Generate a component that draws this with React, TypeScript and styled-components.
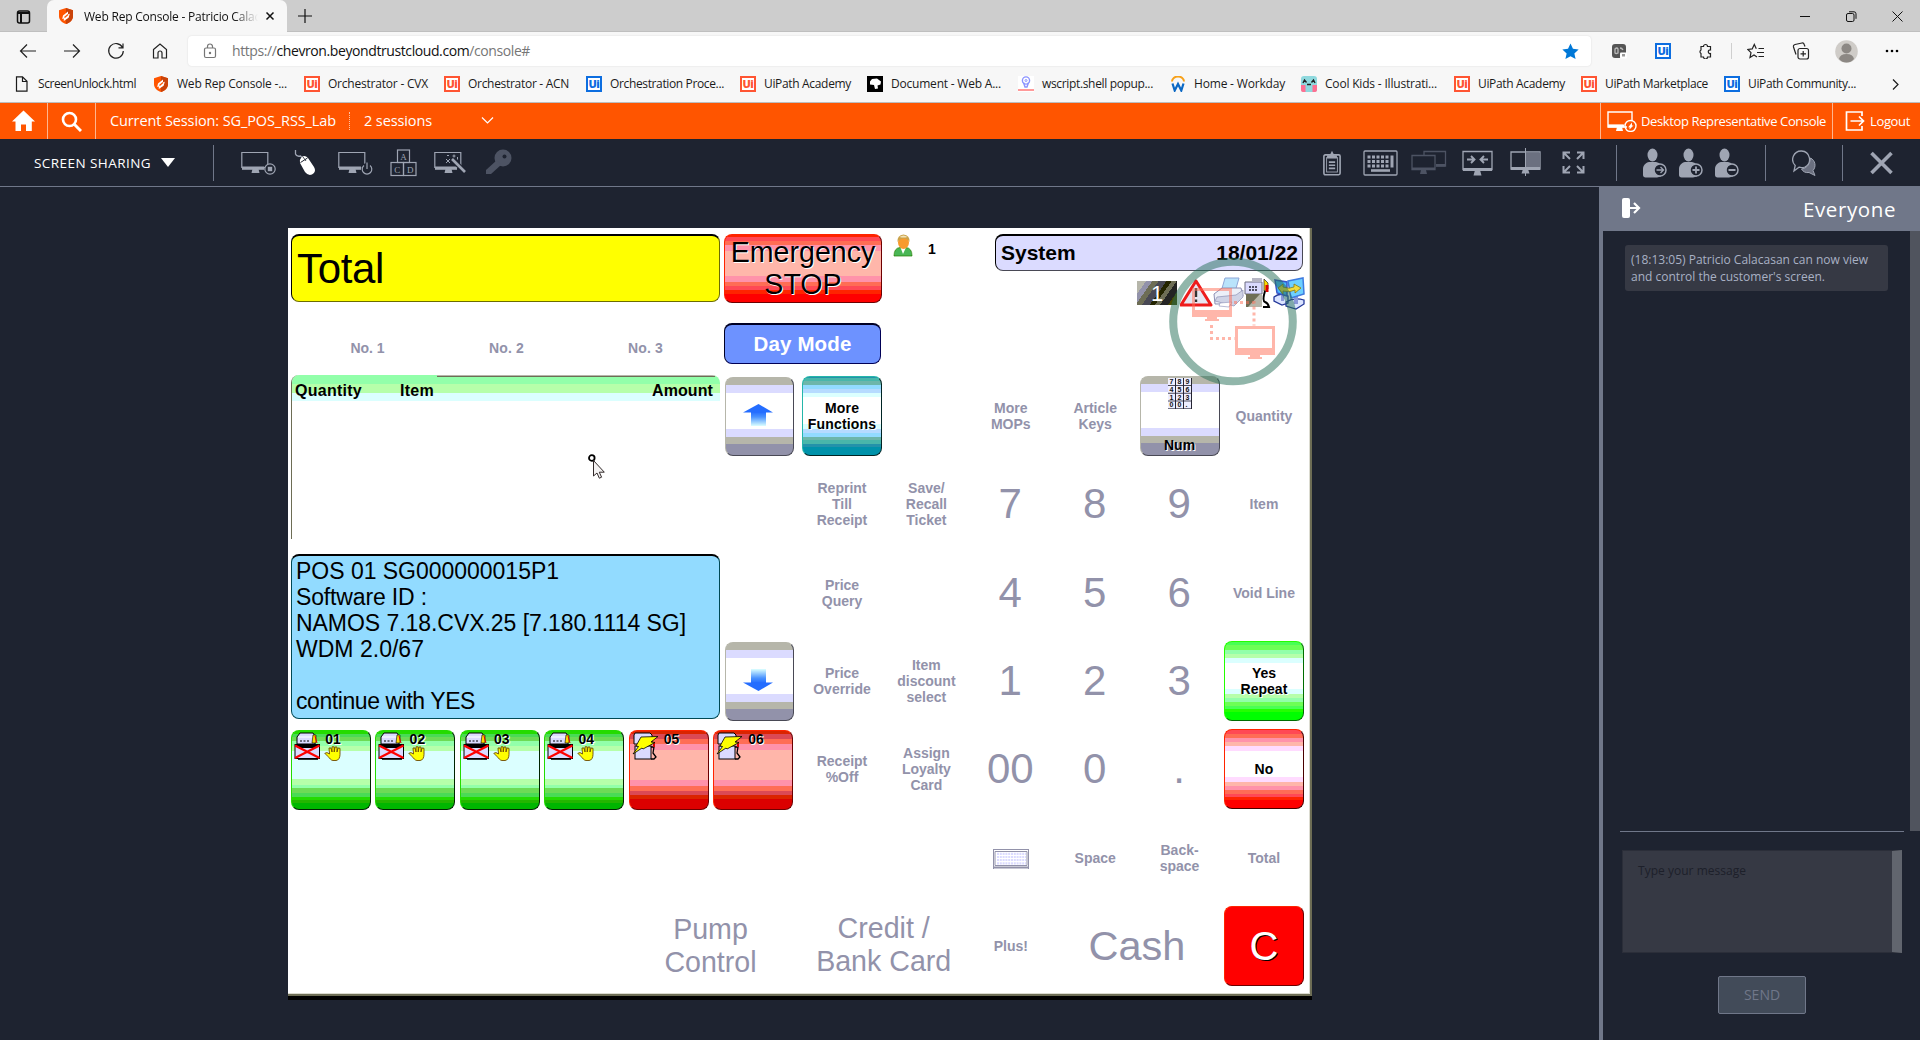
import React, { useLayoutEffect, useRef } from "react";
import styled, { createGlobalStyle, css } from "styled-components";

const UI = `"Open Sans", "Noto Sans", sans-serif`;
const ARIAL = `"Liberation Sans", Arial, sans-serif`;
const NAVY = "#1e2330";
const SLATE = "#707789";
const MUTE = "#9292aa";

const Global = createGlobalStyle`
  *, *::before, *::after { box-sizing: border-box; }
  body { margin: 0; background: ${NAVY}; overflow: hidden; font-family: ${UI}; }
  svg { display: block; flex: none; }
`;

/* ---------- text that is tracked to a given width ---------- */

const FitSpan = styled.span`
  display: inline-block;
  white-space: pre;
  flex: none;
`;

function Fit({ w, children }: { w: number; children: React.ReactNode }) {
  const ref = useRef<HTMLSpanElement>(null);
  useLayoutEffect(() => {
    const el = ref.current;
    if (!el) return;
    el.style.letterSpacing = "0px";
    const n = (el.textContent || "").length || 1;
    el.style.letterSpacing = `${(w - el.getBoundingClientRect().width) / n}px`;
  }, [w]);
  return <FitSpan ref={ref}>{children}</FitSpan>;
}

/* ---------- shell ---------- */

const Page = styled.div`
  width: 1920px;
  height: 1040px;
  display: flex;
  flex-direction: column;
  overflow: hidden;
`;

const TabStrip = styled.div`
  height: 32px;
  flex: none;
  display: flex;
  background: #cdcdcd;
  box-shadow: inset 0 -1px 0 #bfbfbf;
  color: #111;
`;

const TabActions = styled.div`
  width: 47px;
  display: flex;
  align-items: center;
  padding-left: 16px;
`;

const Tab = styled.div`
  width: 240px;
  padding: 0 12px;
  display: flex;
  align-items: center;
  background: #f7f7f7;
  border-radius: 7px 7px 0 0;
  font-size: 12px;
`;

const TabTitle = styled.div`
  width: 174px;
  margin-left: 11px;
  overflow: hidden;
  white-space: nowrap;
  mask-image: linear-gradient(90deg, #000 150px, transparent 174px);
`;

const TabClose = styled.div`
  margin-left: 7px;
`;

const NewTab = styled.div`
  display: flex;
  align-items: center;
  padding-left: 11px;
`;

const WindowButtons = styled.div`
  margin-left: auto;
  display: flex;
  align-items: center;
`;

const WinButton = styled.div`
  width: 46px;
  display: flex;
  justify-content: center;
`;

const NavBar = styled.div`
  height: 38px;
  flex: none;
  display: flex;
  align-items: center;
  background: #f7f7f7;
  color: #222;
`;

const NavIcons = styled.div`
  width: 188px;
  display: flex;
  padding-left: 18px;
  gap: 24px;
`;

const Address = styled.div`
  width: 1403px;
  height: 30px;
  display: flex;
  align-items: center;
  padding: 0 12px 0 14px;
  background: #fff;
  border-radius: 4px;
  box-shadow: 0 0 2px rgba(0, 0, 0, 0.12);
  font-size: 14px;
  color: #767676;
`;

const AddressText = styled.div`
  margin-left: 14px;
  flex: 1;
  line-height: 20px;
  b {
    font-weight: 400;
    color: #111;
  }
`;

const Extensions = styled.div`
  flex: 1;
  display: flex;
  align-items: center;
`;

const ExtSlot = styled.div<{ $w: number }>`
  width: ${(p) => p.$w}px;
  flex: none;
  display: flex;
  justify-content: center;
`;

const ExtRule = styled.div`
  width: 1px;
  height: 16px;
  background: #cfcfcf;
`;

const Bookmarks = styled.div`
  height: 33px;
  flex: none;
  display: flex;
  align-items: center;
  padding: 0 20px 4px 14px;
  background: #f7f7f7;
  border-bottom: 1px solid #bdbdbd;
  font-size: 12px;
  color: #1b1b1b;
`;

const Bookmark = styled.div<{ $w: number }>`
  width: ${(p) => p.$w}px;
  flex: none;
  display: flex;
  align-items: center;
  gap: 8px;
  line-height: 16px;
`;

const BookmarkMore = styled.div`
  margin-left: auto;
`;

const UiBadge = styled.span<{ $c: string }>`
  width: 16px;
  height: 16px;
  flex: none;
  border: 2px solid ${(p) => p.$c};
  color: ${(p) => p.$c};
  background: #fff;
  font: 800 11px/12px ${UI};
  letter-spacing: -0.5px;
  text-align: center;
`;

/* ---------- session bar ---------- */

const SessionBar = styled.div`
  height: 36px;
  flex: none;
  display: flex;
  background: #ff5500;
  color: #fff;
  font-size: 14.5px;
`;

const BarIcon = styled.div<{ $w: number }>`
  width: ${(p) => p.$w}px;
  display: flex;
  align-items: center;
  justify-content: center;
  border-right: 1px solid #ffb58e;
`;

const SessionName = styled.div`
  display: flex;
  align-items: center;
  width: 253px;
  padding: 0 0 2px 14px;
`;

const Dots = styled.div`
  height: 18px;
  margin: 9px 14px 0 0;
  border-left: 1px dotted #ffc4a6;
`;

const SessionCount = styled.div`
  display: flex;
  align-items: center;
  gap: 49px;
  padding-bottom: 2px;
`;

const BarRight = styled.div`
  margin-left: auto;
  display: flex;
  font-size: 13px;
`;

const BarLink = styled.div<{ $w: number; $gap: number; $pad: number }>`
  width: ${(p) => p.$w}px;
  display: flex;
  align-items: center;
  gap: ${(p) => p.$gap}px;
  padding-left: ${(p) => p.$pad}px;
  border-left: 1px solid #ffb58e;
`;

/* ---------- toolbar ---------- */

const Toolbar = styled.div`
  height: 48px;
  flex: none;
  display: flex;
  align-items: center;
  background: ${NAVY};
  border-bottom: 1px solid ${SLATE};
  color: #fff;
`;

const ModeMenu = styled.div`
  width: 213px;
  flex: none;
  padding-left: 34px;
  display: flex;
  align-items: center;
  gap: 10px;
  font-size: 13.5px;
`;

const Triangle = styled.i`
  border: 7.5px solid transparent;
  border-top: 9px solid #fff;
  border-bottom: 0;
`;

const Rule = styled.div<{ $ml?: number }>`
  width: 1px;
  height: 36px;
  flex: none;
  margin-left: ${(p) => p.$ml || 0}px;
  background: ${SLATE};
`;

const Tool = styled.div<{ $w: number }>`
  width: ${(p) => p.$w}px;
  flex: none;
  display: flex;
  justify-content: center;
  color: #9fa5b3;
`;

const ToolGroup = styled.div<{ $ml: number }>`
  display: flex;
  flex: none;
  align-items: center;
  margin-left: ${(p) => p.$ml}px;
`;

/* ---------- workspace ---------- */

const Workspace = styled.div`
  flex: 1;
  display: flex;
  min-height: 0;
`;

const Stage = styled.div`
  width: 1599px;
  padding: 41px 0 0 288px;
`;

const Remote = styled.div`
  position: relative;
  width: 1024px;
  height: 772px;
  background: #000;
`;

const Pos = styled.div`
  height: 768px;
  padding: 6px 7px 0 3px;
  display: flex;
  flex-direction: column;
  background: #fff;
  border-right: 2px solid #6d6d55;
  border-bottom: 2px solid #6d6d55;
  box-shadow: inset -1px -1px 0 #dbdbd0;
  font-family: ${ARIAL};
  color: #000;
`;

const PosHead = styled.div`
  height: 142px;
  display: flex;
`;

const HeadLeft = styled.div`
  width: 429px;
  margin-right: 4px;
`;

const panel = css`
  border: 1px solid;
  border-radius: 8px;
`;

const TotalBox = styled.div`
  ${panel}
  height: 68px;
  padding-left: 5px;
  background: #ffff00;
  border-color: #000 #6d6d00 #6d6d00 #000;
  border-top-width: 2px;
  font-size: 42px;
  line-height: 65px;
`;

const Counters = styled.div`
  display: flex;
  height: 90px;
  padding: 37px 0 0 7px;
`;

const Counter = styled.div`
  width: 139px;
  text-align: center;
  font-weight: 700;
  font-size: 14px;
  line-height: 18px;
  color: ${MUTE};
`;

const HeadMode = styled.div`
  width: 158px;
`;

const stripes = (rows: [string, number][]) => {
  let last = 0;
  const parts = rows.map(([c, end]) => {
    const s = `${c} ${last}px ${end}px`;
    last = end;
    return s;
  });
  return `linear-gradient(${parts.join(",")})`;
};

const skins = {
  emergency: {
    bg: stripes([["#ff2400", 3], ["#ff4955", 7], ["#ff6d55", 11], ["#ff92aa", 17], ["#ffb6aa", 42], ["#ff92aa", 48], ["#ff6d55", 52], ["#ff4955", 56], ["#ff2400", 60], ["#ff0000", 69]]),
    lit: "#ff2400", dark: "#6d0000",
  },
  green: {
    bg: stripes([["#24db00", 4], ["#49db55", 7], ["#6ddb55", 11], ["#92ffaa", 16], ["#b6ffaa", 21], ["#dbffff", 49], ["#b6ffaa", 55], ["#92ffaa", 58], ["#6ddb55", 63], ["#49db55", 67], ["#24db00", 70], ["#24b600", 73], ["#00b600", 80]]),
    lit: "#24db00", dark: "#002400",
  },
  red: {
    bg: stripes([["#db2400", 4], ["#db4955", 9], ["#ff6d55", 14], ["#ff92aa", 20], ["#ffb6aa", 50], ["#ff92aa", 56], ["#ff6d55", 61], ["#db4955", 65], ["#db2400", 69], ["#db0000", 80]]),
    lit: "#ff2400", dark: "#6d0000",
  },
  grey: {
    bg: stripes([["#b6b6aa", 8], ["#dbdbff", 16], ["#ffffff", 52], ["#dbdbff", 60], ["#b6b6aa", 67], ["#9292aa", 80]]),
    lit: "#b6b6aa", dark: "#494955",
  },
  teal: {
    bg: stripes([["#2492aa", 2], ["#49b6aa", 5], ["#6db6aa", 9], ["#92dbff", 13], ["#b6dbff", 17], ["#dbffff", 21], ["#ffffff", 48], ["#dbffff", 53], ["#b6dbff", 57], ["#92dbff", 61], ["#6db6aa", 64], ["#49b6aa", 68], ["#2492aa", 71], ["#0092aa", 80]]),
    lit: "#24b6aa", dark: "#002424",
  },
  yes: {
    bg: stripes([["#24ff00", 1], ["#49ff55", 4], ["#6dff55", 9], ["#92ffaa", 13], ["#b6ffaa", 17], ["#dbffff", 22], ["#ffffff", 48], ["#dbffff", 53], ["#b6ffaa", 57], ["#92ffaa", 61], ["#6dff55", 65], ["#49ff55", 68], ["#24ff00", 71], ["#00ff00", 80]]),
    lit: "#24ff00", dark: "#006d00",
  },
  no: {
    bg: stripes([["#ff2400", 1], ["#ff4955", 5], ["#ff6d55", 9], ["#ff92aa", 13], ["#ffb6aa", 17], ["#ffdbff", 22], ["#ffffff", 48], ["#ffdbff", 53], ["#ffb6aa", 57], ["#ff92aa", 61], ["#ff6d55", 65], ["#ff4955", 68], ["#ff2400", 71], ["#ff0000", 80]]),
    lit: "#ff2400", dark: "#490000",
  },
  clear: { bg: "#ff0000", lit: "#ff2400", dark: "#6d0000" },
};
type Skin = keyof typeof skins;

const PosButton = styled.div<{ $skin: Skin; $w?: number; $h?: number }>`
  width: ${(p) => p.$w || 80}px;
  height: ${(p) => p.$h || 80}px;
  flex: none;
  display: flex;
  align-items: center;
  justify-content: center;
  border: 1px solid;
  border-color: ${(p) => `${skins[p.$skin].lit} ${skins[p.$skin].dark} ${skins[p.$skin].dark} ${skins[p.$skin].lit}`};
  border-radius: 8px;
  background: ${(p) => skins[p.$skin].bg} border-box;
  text-align: center;
  text-shadow: 1px 1px 0 #fff;
  font-weight: 700;
  font-size: 14px;
  line-height: 16px;
`;

const EmergencyText = styled.div`
  font-weight: 400;
  font-size: 28.6px;
  line-height: 32.5px;
  padding-bottom: 1px;
`;

const DayMode = styled.div`
  ${panel}
  width: 157px;
  height: 41px;
  margin-top: 20px;
  background: #6d92ff;
  border-color: #000024 #000055 #000055 #000024;
  border-top-width: 2px;
  color: #fff;
  font-weight: 700;
  font-size: 20.5px;
  line-height: 37px;
  text-align: center;
`;

const Operator = styled.div`
  margin-left: 11px;
  display: flex;
  gap: 15px;
  font-weight: 700;
  font-size: 14px;
  line-height: 31px;
`;

const HeadStatus = styled.div`
  width: 308px;
  margin-left: auto;
`;

const SystemBox = styled.div`
  ${panel}
  height: 37px;
  padding: 0 4px 0 5px;
  display: flex;
  justify-content: space-between;
  background: #dbdbff;
  border-color: #000 #494955 #494955 #000;
  border-top-width: 2px;
  font-weight: 700;
  font-size: 21px;
  line-height: 33px;
`;

const StatusIcons = styled.div`
  display: flex;
  justify-content: flex-end;
  align-items: center;
  height: 34px;
  margin: 5px -3px 0 0;
`;

const ShiftBadge = styled.div`
  width: 40px;
  height: 24px;
  margin: -1px 3px 0 0;
  color: #fff;
  font-size: 22px;
  line-height: 25px;
  text-align: center;
  background: linear-gradient(125deg, #b6b6aa 0 16%, #9292aa 16% 27%, #6d6d55 27% 38%, #494955 38% 52%, #242400 52% 61%, #6d6d55 61% 70%, #242424 70% 84%, #494900 84%);
`;

const PosMain = styled.div`
  height: 612px;
  display: flex;
`;

const LeftPane = styled.div`
  width: 507px;
  flex: none;
  margin-right: 4px;
`;

const LeftTop = styled.div`
  height: 354px;
  display: flex;
`;

const ListColumn = styled.div`
  width: 429px;
  margin: -1px 5px 0 0;
`;

const ListBox = styled.div`
  height: 164px;
  border-left: 1px solid #6d6d55;
  border-radius: 8px 8px 0 0;
`;

const ListHead = styled.div`
  height: 26px;
  display: grid;
  grid-template-columns: 105px 1fr auto;
  padding: 0 7px 0 3px;
  border-radius: 7px 8px 0 0;
  background:
    linear-gradient(#b6b6aa 1px, #6d6d55 1px) 145px 0 / 278px 2px no-repeat,
    linear-gradient(#92ffaa 9px, #b6ffaa 9px 18px, #dbffff 18px);
  font-weight: 700;
  font-size: 16px;
  line-height: 31px;
`;

const InfoBox = styled.div`
  ${panel}
  height: 165px;
  margin-top: 15px;
  padding: 2px 4px;
  background: #92dbff;
  border-color: #000 #004955 #004955 #004955;
  border-top-width: 2px;
  font-size: 23px;
  line-height: 26px;
  white-space: pre;
`;

const ArrowColumn = styled.div`
  width: 69px;
  height: 345px;
  padding-top: 1px;
  display: flex;
  flex-direction: column;
  justify-content: space-between;
  svg {
    margin: 0 3px 3px 0;
  }
`;

const PumpRow = styled.div`
  display: flex;
  gap: 4.4px;
`;

const PumpFace = styled.div`
  align-self: flex-start;
  width: 76px;
  display: flex;
  font-size: 14px;
  padding: 1px 0 0 1px;
`;

const PumpTag = styled.div<{ $hand: boolean }>`
  width: 18px;
  margin-left: ${(p) => (p.$hand ? 3 : 5)}px;
  line-height: 15px;
  text-align: center;
  svg {
    margin-top: -1px;
  }
`;

const PumpControl = styled.div`
  margin: 96px 0 0 337px;
  width: 165px;
  height: 80px;
  display: flex;
  align-items: center;
  justify-content: center;
  text-align: center;
  font-size: 28.6px;
  line-height: 33px;
  color: ${MUTE};
`;

const KeyGrid = styled.div`
  width: 502px;
  flex: none;
  display: grid;
  grid-template-columns: repeat(6, 80px);
  grid-template-rows: repeat(7, 80px);
  column-gap: 4.4px;
  row-gap: 8.33px;
`;

const Key = styled.div<{ $big?: number; $span?: number }>`
  grid-column: span ${(p) => p.$span || 1};
  display: flex;
  align-items: center;
  justify-content: center;
  text-align: center;
  white-space: pre;
  color: ${MUTE};
  font-weight: ${(p) => (p.$big ? 400 : 700)};
  font-size: ${(p) => p.$big || 14}px;
  line-height: ${(p) => (p.$big ? "33px" : "16px")};
  padding: 0 ${(p) => (p.$big ? 1 : 0)}px ${(p) => (p.$big ? 1 : 0)}px 0;
`;

const Black = styled.span<{ $ls?: number }>`
  white-space: pre;
  letter-spacing: ${(p) => p.$ls ?? 0}px;
`;

const NumFace = styled.div`
  height: 76px;
  display: flex;
  flex-direction: column;
  align-items: center;
  justify-content: space-between;
  padding-bottom: 1px;
`;

const ClearLetter = styled.div`
  color: #fff;
  font-weight: 400;
  font-size: 40px;
  line-height: 80px;
  text-shadow: 1px 1px 0 #000;
`;

const Overlay = styled.svg`
  position: absolute;
  left: 880px;
  top: 28px;
`;

const Pointer = styled.svg`
  position: absolute;
  left: 299px;
  top: 225px;
`;

/* ---------- chat ---------- */

const Chat = styled.div`
  width: 321px;
  display: flex;
  flex-direction: column;
  background: ${NAVY};
  border-left: 4px solid ${SLATE};
`;

const ChatHead = styled.div`
  height: 44px;
  flex: none;
  display: flex;
  align-items: center;
  justify-content: space-between;
  padding: 0 24px 1px 18px;
  background: ${SLATE};
  color: #fff;
  font-size: 20.5px;
`;

const ChatLog = styled.div`
  height: 600px;
  padding: 14px 22px;
  border-right: 10px solid #50545e;
`;

const Bubble = styled.div`
  width: 263px;
  height: 46px;
  padding: 6px;
  border-radius: 3px;
  background: #363944;
  color: #a9b1c4;
  font-size: 12px;
  line-height: 17px;
`;

const ChatRule = styled.div`
  height: 1px;
  margin: 0 16px 0 17px;
  background: ${SLATE};
`;

const Message = styled.div`
  width: 280px;
  height: 103px;
  margin: 18px 0 0 19px;
  padding: 11px 15px;
  background: #363944;
  border: 1px solid #2b2e39;
  border-right: 10px solid #61656e;
  color: #1d202a;
  font-size: 12px;
  line-height: 18px;
`;

const Send = styled.div`
  width: 88px;
  height: 38px;
  margin: 23px 0 0 115px;
  border: 1px solid ${SLATE};
  border-radius: 2px;
  background: #424b59;
  color: ${SLATE};
  font-size: 14px;
  line-height: 36px;
  text-align: center;
`;

/* ---------- icons ---------- */

const S = (p: { w: number; h: number; vb?: string; sw?: number; children: React.ReactNode }) => (
  <svg width={p.w} height={p.h} viewBox={p.vb || `0 0 ${p.w} ${p.h}`} fill="none" stroke="currentColor" strokeWidth={p.sw || 1.2}>
    {p.children}
  </svg>
);

const Shield = ({ w = 14 }: { w?: number }) => (
  <svg width={w} height={16} viewBox="0 0 14 16">
    <path d="M7 0 14 2.2V8c0 4-3 6.600-7 8-4-1.400-7-4-7-8V2.200Z" fill="#ff5500" />
    <path d="M7 0 14 2.200V8c0 4-3 6.600-7 8Z" fill="#c9430a" />
    <path d="M4 7.500 9 3.600v2.600l1.800-.4-1.200 4L4.800 13v-2.600l-1.600.6Z" fill="#fff" />
    <path d="M5.500 9.500 9 6.500" stroke="#ff5500" strokeWidth="1.300" />
  </svg>
);

const UserGlyph = ({ kind }: { kind: "go" | "plus" | "minus" }) => (
  <S w={24} h={30} sw={1.3}>
    <ellipse cx="9.500" cy="7" rx="5" ry="6.500" fill="#9fa5b3" stroke="none" />
    <path d="M0 27V21c0-4 3-6.500 6-7h7c2 .3 4 1.500 5 3.500v11L14 29.500H2.500C1 29.500 0 28.500 0 27Z" fill="#9fa5b3" stroke="none" />
    <circle cx="17" cy="22" r="6" fill={NAVY} stroke="#9fa5b3" strokeWidth="1.500" />
    {kind === "go" && <path d="M13.500 22h6.500M17.500 19l3 3-3 3" />}
    {kind === "plus" && <path d="M13.500 22h7M17 18.500v7" strokeWidth="1.800" />}
    {kind === "minus" && <path d="M13.500 22h7" strokeWidth="2" />}
  </S>
);

const PrinterX = () => (
  <svg width={27} height={28} viewBox="0 0 27 28">
    <path d="M6 1h13l2 3v8H3V5Z" fill="#dbdbff" stroke="#000" />
    <path d="M4 5h14" stroke="#fff" />
    <path d="M19 3h3v8h-4Z" fill="#ffdb00" stroke="#000" strokeWidth=".6" />
    <path d="M21 4l2 7" stroke="#db0000" />
    <path d="M6 9h2M9.500 9h2M13 9h2" stroke="#000" strokeWidth="1" />
    <rect x="1" y="12.500" width="24.500" height="14" fill="#dbdbff" stroke="#000" />
    <path d="M1 13h24l-3 3H4Z" fill="#000" />
    <path d="M4 27h20" stroke="#000" strokeWidth="1.600" />
    <path d="M1 13.500 25.500 26M25.500 13.500 1 26" stroke="#ff0000" strokeWidth="2.200" />
  </svg>
);

const Hand = () => (
  <svg width={18} height={15} viewBox="0 0 18 15">
    <path d="M5.500 8 5 2h2l1 4V.8h2.200V6L11 1h2v5l1-4 2 .3V8.500c0 3-1.500 6-4 6H9C7 14.500 5.500 12 4 10.500L.8 7.300 3 6.600Z" fill="#ffff00" stroke="#6d4900" strokeWidth=".9" />
  </svg>
);

const PumpBolt = () => (
  <svg width={26} height={28} viewBox="0 0 26 28">
    <path d="M3 1h15l2 2v9H2V3Z" fill="#dbdbff" stroke="#000" />
    <rect x="3" y="14" width="16" height="13" fill="#dbdbff" stroke="#000" />
    <path d="M19 15h3l-1 6 3 4-2 2h-3" fill="none" stroke="#000" strokeWidth="1.300" />
    <path d="M22 10v5" stroke="#db0000" strokeWidth="2" />
    <path d="M9 5 26 4.500 19 10l4 .5L11 17l-1-1-9 6 5.500-7.500L4 14Z" fill="#ffff00" stroke="#000" strokeWidth=".8" />
  </svg>
);

const Arrow = ({ down }: { down?: boolean }) => (
  <svg width={30} height={24} viewBox="0 0 30 24">
    <defs>
      <linearGradient id={down ? "ad" : "au"} x1="0" x2="0" y1={down ? "1" : "0"} y2={down ? "0" : "1"}>
        <stop offset="0" stopColor="#246dff" />
        <stop offset=".35" stopColor="#4992ff" />
        <stop offset="1" stopColor="#dbffff" />
      </linearGradient>
    </defs>
    <path d={down ? "M8 1h15v14H8Z" : "M8 9h15v14H8Z"} fill={`url(#${down ? "ad" : "au"})`} />
    <path d={down ? "M0 14.500h30L15.500 23Z" : "M0 9.500h30L15.500 1Z"} fill="#246dff" />
  </svg>
);

const Monitor = ({ children, w = 34 }: { children?: React.ReactNode; w?: number }) => (
  <S w={w} h={26} sw={1.2}>
    <path d="M.8 2.500h26v15H.8Z" />
    <path d="M1 16.500h22v3.300H1Z" fill="currentColor" stroke="none" />
    <path d="M11.500 19h6l1 4h-8Z" fill="currentColor" stroke="none" />
    {children}
  </S>
);

const fills = ["#ff5533", "#0d6ee0"];

const bookmarks: { t: string; slot: number; w: number; icon: React.ReactNode }[] = [
  { t: "ScreenUnlock.html", slot: 139, w: 98, icon: <S w={16} h={16}><path d="M2.500.8h6l4.500 4.500V15.200H2.500ZM8.500.8v4.700H13" /></S> },
  { t: "Web Rep Console -...", slot: 151, w: 110, icon: <Shield w={16} /> },
  { t: "Orchestrator - CVX", slot: 140, w: 100, icon: <UiBadge $c={fills[0]}>Ui</UiBadge> },
  { t: "Orchestrator - ACN", slot: 142, w: 101, icon: <UiBadge $c={fills[0]}>Ui</UiBadge> },
  { t: "Orchestration Proce...", slot: 154, w: 114, icon: <UiBadge $c={fills[1]}>Ui</UiBadge> },
  { t: "UiPath Academy", slot: 127, w: 87, icon: <UiBadge $c={fills[0]}>Ui</UiBadge> },
  { t: "Document - Web A...", slot: 151, w: 110, icon: <svg width={16} height={16}><path d="M0 0h16v16H0Z" /><path d="M3 5.500 5 3l5-.5 4 3-.500 3-3 1 .5 3-3 .5-1-4L3 8.500Z" fill="#fff" /></svg> },
  { t: "wscript.shell popup...", slot: 152, w: 111, icon: <svg width={16} height={16} fill="none" stroke="#8b93ff"><path d="M0 0h16v16H0Z" fill="#fff" stroke="none" /><circle cx="8" cy="4.500" r="3.600" strokeWidth="1.400" /><path d="M5.500 6.500 7 11h2l1.500-4.500" strokeWidth="1.400" /><circle cx="8" cy="4.500" r="1" /><path d="M0 14h16" stroke="#ff9a9a" strokeWidth="2" /></svg> },
  { t: "Home - Workday", slot: 131, w: 91, icon: <svg width={16} height={16} fill="none"><path d="M2 5.500a6 5 0 0 1 12 0" stroke="#f7a11a" strokeWidth="2" /><path d="m2.500 7.500 2.200 7L8 8l3.300 6.500 2.200-7" stroke="#0b68c4" strokeWidth="2.200" /></svg> },
  { t: "Cool Kids - Illustrati...", slot: 153, w: 112, icon: <svg width={16} height={16}><rect width="16" height="16" rx="3" fill="#8fd9de" /><path d="M0 9h4.500v7H2a2 2 0 0 1-2-2ZM11.500 9H16v5a2 2 0 0 1-2 2h-2.500Z" fill="#ff6f91" /><path d="M2 7 3.500 4l2 2.500M10.500 6.500l2-2.500L14 7M6 8.500h4" fill="none" stroke="#222" strokeWidth="1.400" /></svg> },
  { t: "UiPath Academy", slot: 127, w: 87, icon: <UiBadge $c={fills[0]}>Ui</UiBadge> },
  { t: "UiPath Marketplace", slot: 143, w: 103, icon: <UiBadge $c={fills[0]}>Ui</UiBadge> },
  { t: "UiPath Community...", slot: 134, w: 108, icon: <UiBadge $c={fills[1]}>Ui</UiBadge> },
];

function Chrome() {
  return (
    <>
      <TabStrip>
        <TabActions>
          <S w={15} h={15} sw={1.5}><rect x="1.500" y="2" width="12" height="12" rx="2" /><path d="M1.500 4h12M5 5v9" strokeWidth="2" /></S>
        </TabActions>
        <Tab>
          <Shield />
          <TabTitle><Fit w={176}>Web Rep Console - Patricio Calac</Fit></TabTitle>
          <TabClose><S w={10} h={10} sw={1.5}><path d="m1.500 1.500 7 7m0-7-7 7" /></S></TabClose>
        </Tab>
        <NewTab><S w={14} h={14}><path d="M7 0v14M0 7h14" /></S></NewTab>
        <WindowButtons>
          <WinButton><S w={10} h={10} sw={1}><path d="M0 5.500h10" /></S></WinButton>
          <WinButton><S w={11} h={11} sw={1}><rect x=".5" y="2.500" width="7.500" height="8" rx="1.500" /><path d="M3 .8h5a2 2 0 0 1 2 2v5" /></S></WinButton>
          <WinButton><S w={11} h={11} sw={1}><path d="m.5.500 10 10m0-10-10 10" /></S></WinButton>
        </WindowButtons>
      </TabStrip>
      <NavBar>
        <NavIcons>
          <S w={20} h={20}><path d="M18 10H2.500M9 3.500 2.500 10 9 16.500" /></S>
          <S w={20} h={20}><path d="M2 10h15.500M11 3.500l6.500 6.500-6.500 6.500" /></S>
          <S w={20} h={20}><path d="M16.500 6.500A7.300 7.300 0 1 0 17.300 10M17 2.500v4.300h-4.500" /></S>
          <S w={20} h={20}><path d="M3.500 8.500 10 3l6.500 5.500V17h-4.500v-5a2 2 0 0 0-4 0v5H3.500Z" /></S>
        </NavIcons>
        <Address>
          <S w={16} h={18}><rect x="2.500" y="6" width="11" height="9.500" rx="1.500" /><path d="M5.500 6V4.500a2.500 2.500 0 0 1 5 0V6" /><circle cx="8" cy="11" r=".6" /></S>
          <AddressText><Fit w={298}>https://<b>chevron.beyondtrustcloud.com</b>/console#</Fit></AddressText>
          <svg width={17} height={17} viewBox="0 0 18 18"><path d="m9 .5 2.600 5.600 6 .7-4.500 4.200 1.300 6L9 14l-5.400 3 1.300-6L.4 6.800l6-.7Z" fill="#0078d7" /></svg>
        </Address>
        <Extensions>
          <ExtSlot $w={56}><svg width={15} height={15}><rect width="14" height="14" rx="3" fill="#555" /><path d="M3 5q2-2 3 0v4q-2 1-3 0ZM8 4q2 0 3 2" fill="none" stroke="#bbb" strokeWidth="1.300" /><rect x="8" y="8.500" width="7" height="6" rx="1" fill="#fff" /><rect x="10" y="10" width="3" height="2.500" fill="#999" /></svg></ExtSlot>
          <ExtSlot $w={32}><UiBadge $c={fills[1]}>Ui</UiBadge></ExtSlot>
          <ExtSlot $w={52}><S w={16} h={16}><path d="M4 3.500h2.500a2 2 0 0 1 4 0h3V7a1.800 1.800 0 1 0 0 3.500V14h-3a2 2 0 0 1-4 0H4v-3.500A2 2 0 0 1 4 7Z" /></S></ExtSlot>
          <ExtRule />
          <ExtSlot $w={48}><S w={18} h={16}><path d="M10 14 7 12l-4 2.500 1-4.800L.8 6.500l4.400-.6L7.300 1.500l2 4.300M11.500 5.500H17M10 9.500h7M11.500 13.500H17" /></S></ExtSlot>
          <ExtSlot $w={42}><S w={18} h={18}><rect x="6" y="6.500" width="10.500" height="10.500" rx="2" /><path d="M11.200 9v5.500M8.500 11.800H14M4 12.500 1.500 5A2 2 0 0 1 3 2.500L10 1a2 2 0 0 1 2.200 1.500L13 4.500" /></S></ExtSlot>
          <ExtSlot $w={48}><svg width={23} height={23}><circle cx="11.500" cy="11.500" r="11.300" fill="#cfccc8" /><circle cx="11.500" cy="8.500" r="5" fill="#8c8884" /><path d="M4 19q1-5 7.500-5t7.500 5q-3 3.500-7.500 3.500T4 19Z" fill="#8c8884" /></svg></ExtSlot>
          <ExtSlot $w={44}><svg width={14} height={4}><circle cx="2" cy="2" r="1.300" /><circle cx="7" cy="2" r="1.300" /><circle cx="12" cy="2" r="1.300" /></svg></ExtSlot>
        </Extensions>
      </NavBar>
      <Bookmarks>
        {bookmarks.map((b, i) => (
          <Bookmark key={i} $w={b.slot}>{b.icon}<Fit w={b.w}>{b.t}</Fit></Bookmark>
        ))}
        <BookmarkMore><S w={9} h={13}><path d="m2 1.500 5 5-5 5" /></S></BookmarkMore>
      </Bookmarks>
    </>
  );
}

function Session() {
  return (
    <SessionBar>
      <BarIcon $w={48}><svg width={23} height={22}><path d="M11.500.5 23 11.500h-3.200V21H14v-6.500H9V21H3.500v-9.500H0Z" fill="#fff" /></svg></BarIcon>
      <BarIcon $w={48}><S w={21} h={21} sw={2.6}><circle cx="8.500" cy="8.500" r="6.500" /><path d="m13 13 7 7" strokeWidth="3" /></S></BarIcon>
      <SessionName><Fit w={226}>Current Session: SG_POS_RSS_Lab</Fit></SessionName>
      <Dots />
      <SessionCount>
        <Fit w={68}>2 sessions</Fit>
        <S w={13} h={9}><path d="m1 1.500 5.500 5.500L12 1.500" /></S>
      </SessionCount>
      <BarRight>
        <BarLink $w={232} $gap={3} $pad={6}>
          <S w={31} h={22} sw={1.4}><path d="M20 17H1V2h24v9M1 15.500h15" /><path d="M1 14.500h16v3H1Z" fill="#fff" stroke="none" /><path d="M10 17h5l1 4H9Z" fill="#fff" stroke="none" /><circle cx="23.500" cy="16" r="5.500" /><path d="M21 17.500 25 12.500v3l1.500 0-4 4v-2.500Z" fill="#fff" stroke="none" /></S>
          <Fit w={185}>Desktop Representative Console</Fit>
        </BarLink>
        <BarLink $w={88} $gap={5} $pad={12}>
          <S w={20} h={20} sw={1.7}><path d="M17 5V1H1.500v18H17v-4M5.500 10H18M14 5.500l4.500 4.500-4.500 4.500" /></S>
          <Fit w={40}>Logout</Fit>
        </BarLink>
      </BarRight>
    </SessionBar>
  );
}

const BlockLetter = styled.text`
  font: 9px "Liberation Serif", serif;
  fill: #9fa5b3;
  stroke: none;
`;

function Tools() {
  return (
    <Toolbar>
      <ModeMenu><Fit w={117}>SCREEN SHARING</Fit><Triangle /></ModeMenu>
      <Rule />
      <ToolGroup $ml={27}>
        <Tool $w={35}><Monitor w={36}><circle cx="29" cy="19" r="5.200" fill={NAVY} /><rect x="26.800" y="16.800" width="4.400" height="4.400" fill="currentColor" stroke="none" /></Monitor></Tool>
        <Tool $w={60}><svg width={24} height={27}><path d="M1.500 1v4q1 3 5 2l2 2" fill="none" stroke="#9fa5b3" strokeWidth="1.300" /><path d="M7 9q3-4 7 0l6 9q3 5-2 7.500-4 1.500-7-2.500L6 14q-1-3 1-5Z" fill="#fff" /><path d="m6.500 13.500 7-4.500" stroke={NAVY} /><path d="m9 8 3 4" stroke={NAVY} strokeWidth=".8" /></svg></Tool>
        <Tool $w={38}><Monitor w={35}><circle cx="29" cy="19" r="5" fill={NAVY} stroke={NAVY} strokeWidth="2" /><path d="M26 15.500a4.800 4.800 0 1 0 6 0M29 12.500V19" /></Monitor></Tool>
        <Tool $w={58}><S w={27} h={28} sw={1.2}><rect x="7.500" y="1" width="12" height="12.500" /><rect x="1" y="13.500" width="12.500" height="13" /><rect x="13.500" y="13.500" width="12.500" height="13" /><BlockLetter x="10.300" y="10.500">A</BlockLetter><BlockLetter x="4.300" y="23.500">C</BlockLetter><BlockLetter x="17" y="23.500">D</BlockLetter></S></Tool>
        <Tool $w={36}><Monitor w={33}><path d="m17 8 14 14" stroke={NAVY} strokeWidth="5" /><path d="m18 9 13 13" strokeWidth="2.600" /><path d="m12 9 4 4m0-4-4 4M20 4.500v3M18.500 6h3M23.500 7v2.500M13 5.500h2" strokeWidth="1" /></Monitor></Tool>
        <Tool $w={60}><svg width={27} height={27}><circle cx="18" cy="9" r="8.500" fill="#4d5363" /><path d="m12 11 4 5L6 25H1v-4Z" fill="#4d5363" /><circle cx="19.500" cy="7.500" r="2" fill={NAVY} /></svg></Tool>
      </ToolGroup>
      <ToolGroup $ml={780}>
        <Tool $w={48}><S w={18} h={26} vb="0 0 20 28" sw={1.800}><rect x="1" y="5" width="18" height="22" rx="1.500" /><rect x="4" y="8" width="12" height="16" strokeWidth="1" /><path d="M4.500 9V5.500h3L10 .5l2.500 5h3V9Z" fill="currentColor" stroke="none" /><path d="M6.500 13h7M6.500 16.500h7M6.500 20h7" /></S></Tool>
        <Tool $w={49}><S w={35} h={26} vb="0 0 35 26" sw={1.3}><rect x="1" y="1" width="33" height="24" rx="1" /><path d="M4.500 7h22M4.500 11.500h22M4.500 16h22" strokeWidth="3" strokeDasharray="3 1.500" /><path d="M29 5.500v12" strokeWidth="3" /><path d="M8 20.500h19" strokeWidth="2.600" /></S></Tool>
        <Tool $w={48}><svg width={36} height={26} fill="none" stroke="#4d5363" strokeWidth="1.300"><path d="M13 5V1.500h21.500V16H25M1 5.500h23v14H1Z" /><path d="M1 17.500h23v2.500H1ZM10 20h5l1 4H9ZM25 14h9v2.500h-9Z" fill="#4d5363" stroke="none" /></svg></Tool>
        <Tool $w={48}><S w={31} h={26} sw={1.3}><path d="M1 1.500h29v18H1Z" /><path d="M1 18h29v3H1ZM13 20h5l1.500 5.500h-8Z" fill="currentColor" stroke="none" /><path d="M5 9.500h7M9 6l3.500 3.500L9 13M26 9.500h-7M22 6l-3.500 3.500L22 13" strokeWidth="1.900" /></S></Tool>
        <Tool $w={48}><S w={31} h={30} sw={1.3}><path d="M1 4h29v17H1Z" /><path d="M15.500 4.500H30V19H15.500Z" fill="#6b7080" stroke="none" /><path d="M1 19h29v3H1ZM13 21h5l1.500 4.500h-8Z" fill="currentColor" stroke="none" /><path d="M15.500 0v28" strokeWidth="1" /></S></Tool>
        <Tool $w={48}><S w={23} h={23} sw={2}><path d="M1.500 8V1.500H8M15 1.500h6.500V8M21.500 15v6.500H15M8 21.500H1.500V15M2 2l6 6M21 2l-6 6M21 21l-6-6M2 21l6-6" /></S></Tool>
        <Rule $ml={19} />
      </ToolGroup>
      <ToolGroup $ml={26}>
        <Tool $w={24}><UserGlyph kind="go" /></Tool>
        <Tool $w={48}><UserGlyph kind="plus" /></Tool>
        <Tool $w={24}><UserGlyph kind="minus" /></Tool>
        <Rule $ml={26} />
        <Tool $w={76}><S w={24} h={26} sw={1.300}><path d="M9.500 1a8.500 8.500 0 0 1 3.500 16q-3 1-6 .2L2 21l1.200-5.500A8.500 8.500 0 0 1 9.500 1Z" /><path d="M18.500 8a8 8 0 0 1 2.500 12.500l2 5L17 22.500q-5 .8-7.500-3.500 8-1 9-11Z" fill="#6b7080" strokeWidth="1" /></S></Tool>
        <Rule />
        <Tool $w={76}><S w={23} h={24} sw={3.600}><path d="m1.500 2 20 20m0-20-20 20" /></S></Tool>
      </ToolGroup>
    </Toolbar>
  );
}

const KeypadIcon = () => (
  <svg width={24} height={31} viewBox="0 0 24 31">
    <path d="M0 0h24v31H0Z" fill="#242433" />
    {["789", "456", "123", "00."].map((row, r) =>
      row.split("").map((d, c) => (
        <g key={`${r}${c}`}>
          <rect x={c * 8} y={r * 7.800} width="7" height="7" fill="#eeeeff" />
          <text x={c * 8 + 1.500} y={r * 7.800 + 6} fontSize="7" fontWeight="700" fill="#111" fontFamily="Liberation Sans, sans-serif" textShadow="none">{d}</text>
        </g>
      ))
    )}
  </svg>
);

const KeypadWrap = styled.div`
  text-shadow: none;
`;

const KeyboardIcon = () => (
  <svg width={36} height={22} viewBox="0 0 36 22">
    <rect x=".5" y="2.500" width="35" height="20" fill="#fff" stroke="#9292aa" />
    <path d="M2 4.500h32v14H2Z" fill="#fff" stroke="#9292aa" strokeWidth="1" />
    <path d="M4 6.800h29M4 10h29M4 13h29M4 16.300h29" stroke="#dbdbff" strokeWidth="2.200" strokeDasharray="2 .8" />
    <path d="M1 20.500h34" stroke="#9292aa" strokeWidth="2" />
  </svg>
);

function Pump({ n, red }: { n: string; red?: boolean }) {
  return (
    <PosButton $skin={red ? "red" : "green"}>
      <PumpFace>
        {red ? <PumpBolt /> : <PrinterX />}
        <PumpTag $hand={!red}>{n}{!red && <Hand />}</PumpTag>
      </PumpFace>
    </PosButton>
  );
}

function PosScreen() {
  return (
    <Pos>
      <PosHead>
        <HeadLeft>
          <TotalBox><Fit w={87}>Total</Fit></TotalBox>
          <Counters>
            <Counter><Fit w={34}>No. 1</Fit></Counter>
            <Counter><Fit w={35}>No. 2</Fit></Counter>
            <Counter><Fit w={35}>No. 3</Fit></Counter>
          </Counters>
        </HeadLeft>
        <HeadMode>
          <PosButton $skin="emergency" $w={158} $h={69}><EmergencyText>Emergency<br />STOP</EmergencyText></PosButton>
          <DayMode><Fit w={98}>Day Mode</Fit></DayMode>
        </HeadMode>
        <Operator>
          <svg width={20} height={23}><path d="M1 22q0-8 6-8.500h6q6 .5 6 8.500Z" fill="#49b655" stroke="#248000" strokeWidth=".7" /><path d="M7.500 13.500 10 20l3-6.500Z" fill="#fff" /><ellipse cx="10.500" cy="8.500" rx="5.500" ry="6.500" fill="#f79a2e" /><path d="M4.500 8Q4 1 10.500.5 17 1 16.500 8q-2-4-6-3.500-4 0-6 3.500Z" fill="#c9a24a" /><path d="M6.500 3q4-3 8 0-4 1-8 0Z" fill="#f2e3b8" /></svg>
          <span>1</span>
        </Operator>
        <HeadStatus>
          <SystemBox><span>System</span><span>18/01/22</span></SystemBox>
          <StatusIcons>
            <ShiftBadge>1</ShiftBadge>
            <svg width={33} height={28}><path d="M16 2 31 26H1Z" fill="#e6e6f2" stroke="#ee1c1c" strokeWidth="3" strokeLinejoin="round" /><path d="M16 9v9M16 20.500v2.500" stroke="#333" strokeWidth="2.400" /></svg>
            <svg width={31} height={32}><path d="M12 1h14l-4 14H8Z" fill="#b9e3fb" stroke="#8fa6d8" /><path d="M1 17 9 11h19l2 8-10 8H2Z" fill="#eceff8" stroke="#8d90b5" /><path d="m2 24 2-4 19-2 7-5v7l-9 9Z" fill="#cfd3e6" stroke="#8d90b5" strokeWidth=".7" /><path d="m7 26 12-1-3 5-10-1Z" fill="#fff" stroke="#9a9cc0" strokeWidth=".7" /></svg>
            <svg width={29} height={32}><path d="M1 5h17v12H1Z" fill="#dbdbff" stroke="#6d6d80" /><path d="M8 1h10v4H8Z" fill="#b6b6c4" /><path d="M2 17h16v13H2Z" fill="#6d6d55" /><path d="m4 30 12-13h2v13Z" fill="#b6b6aa" /><path d="M5 10h9M5 13h9" stroke="#242433" strokeDasharray="2 1" strokeWidth="1.400" /><path d="m20 2 4 4v6l-4 2Z" fill="#ffdb00" stroke="#222" strokeWidth=".7" /><path d="M23 8v7" stroke="#db0000" strokeWidth="3" /><path d="M21 14q-3 10 0 11t4 5h-6" fill="none" stroke="#000" strokeWidth="2" /></svg>
            <svg width={33} height={33}>
              <path d="M1 20q6-5 14-1v7l-6 2-8-4ZM13 25q8-5 18-2v4l-8 5-10-3Z" fill="#dbe4ff" stroke="#24389a" strokeWidth="1.300" />
              <path d="M8 17h3v7H8ZM21 18h4v9h-4Z" fill="#8a97d8" />
              <path d="m2 3 12 2v14L4 16Z" fill="#49b6ff" stroke="#3a55c8" strokeWidth="1.500" />
              <path d="m15 4 15-3 1 16-13 4Z" fill="#6dd0ff" stroke="#3f7be0" strokeWidth="1.500" />
              <path d="m5 11 5-4v3q6 2.500 11 0V7l7 4-6 5v-3q-6 3-12 1v3Z" fill="#f0dc3c" stroke="#8a7a10" strokeWidth=".8" />
            </svg>
          </StatusIcons>
        </HeadStatus>
      </PosHead>
      <PosMain>
        <LeftPane>
          <LeftTop>
            <ListColumn>
              <ListBox>
                <ListHead><span><Fit w={67}>Quantity</Fit></span><span><Fit w={34}>Item</Fit></span><span><Fit w={61}>Amount</Fit></span></ListHead>
              </ListBox>
              <InfoBox>
                <Fit w={263}>POS 01 SG000000015P1</Fit>{"\n"}
                <Fit w={131}>Software ID :</Fit>{"\n"}
                <Fit w={390}>NAMOS 7.18.CVX.25 [7.180.1114 SG]</Fit>{"\n"}
                <Fit w={128}>WDM 2.0/67</Fit>{"\n\n"}
                <Fit w={179}>continue with YES</Fit>
              </InfoBox>
            </ListColumn>
            <ArrowColumn>
              <PosButton $skin="grey" $w={69} $h={79}><Arrow /></PosButton>
              <PosButton $skin="grey" $w={69} $h={79}><Arrow down /></PosButton>
            </ArrowColumn>
          </LeftTop>
          <PumpRow>
            <Pump n="01" /><Pump n="02" /><Pump n="03" /><Pump n="04" /><Pump n="05" red /><Pump n="06" red />
          </PumpRow>
          <PumpControl>Pump<br />Control</PumpControl>
        </LeftPane>
        <KeyGrid>
          <PosButton $skin="teal"><Black $ls={0.2}>{"More\nFunctions"}</Black></PosButton>
          <Key /><Key>{"More\nMOPs"}</Key><Key>{"Article\nKeys"}</Key>
          <PosButton $skin="grey"><NumFace><KeypadWrap><KeypadIcon /></KeypadWrap><Black>Num</Black></NumFace></PosButton>
          <Key>Quantity</Key>

          <Key>{"Reprint\nTill\nReceipt"}</Key><Key>{"Save/\nRecall\nTicket"}</Key>
          <Key $big={42}>7</Key><Key $big={42}>8</Key><Key $big={42}>9</Key><Key>Item</Key>

          <Key>{"Price\nQuery"}</Key><Key />
          <Key $big={42}>4</Key><Key $big={42}>5</Key><Key $big={42}>6</Key><Key>Void Line</Key>

          <Key>{"Price\nOverride"}</Key><Key>{"Item\ndiscount\nselect"}</Key>
          <Key $big={42}>1</Key><Key $big={42}>2</Key><Key $big={42}>3</Key>
          <PosButton $skin="yes"><Black>{"Yes\nRepeat"}</Black></PosButton>

          <Key>{"Receipt\n%Off"}</Key><Key>{"Assign\nLoyalty\nCard"}</Key>
          <Key $big={42}>00</Key><Key $big={42}>0</Key><Key $big={42}>.</Key>
          <PosButton $skin="no"><Black>No</Black></PosButton>

          <Key /><Key /><Key><KeyboardIcon /></Key><Key>Space</Key><Key>{"Back-\nspace"}</Key><Key>Total</Key>

          <Key $big={28.6} $span={2}>{"Credit /\nBank Card"}</Key>
          <Key>Plus!</Key>
          <Key $big={41.5} $span={2}>Cash</Key>
          <PosButton $skin="clear"><ClearLetter>C</ClearLetter></PosButton>
        </KeyGrid>
      </PosMain>
    </Pos>
  );
}

export default function App() {
  return (
    <Page>
      <Global />
      <Chrome />
      <Session />
      <Tools />
      <Workspace>
        <Stage>
          <Remote>
            <PosScreen />
            <Overlay width={130} height={132} fill="none">
              <circle cx="65" cy="65.500" r="59.800" stroke="#246d55" strokeOpacity=".5" strokeWidth="8" />
              <g fill="#ff6d55" fillOpacity=".5" fillRule="evenodd">
                <path d="M24 32h40v29H49v2h2v2H37v-2h2v-2H24ZM27 35v19h34V35Z" />
                <path d="M67 70h40v29H92v2h2v2H80v-2h2v-2H67ZM70 73v19h34V73Z" />
              </g>
              <g stroke="#ff6d55" strokeOpacity=".5" strokeWidth="3" strokeDasharray="3 3">
                <path d="M43.500 69v13.500h23" />
                <path d="M66 46.500h20v23" />
              </g>
            </Overlay>
            <Pointer width={24} height={32}>
              <circle cx="4.800" cy="5" r="2.800" fill="#fff" stroke="#000" strokeWidth="1.800" />
              <path d="M6.500 7.500v15.500l3.500-3 2.300 5.200 2.300-1-2.300-5h5Z" fill="#f4f2f2" stroke="#322a2a" strokeWidth="1" />
            </Pointer>
          </Remote>
        </Stage>
        <Chat>
          <ChatHead>
            <svg width={20} height={21}><rect x="1" width="8" height="20" rx="2" fill="#fff" /><path d="M6 10h12M13 5l5 5-5 5" fill="none" stroke="#fff" strokeWidth="2.200" /></svg>
            <Fit w={93}>Everyone</Fit>
          </ChatHead>
          <ChatLog>
            <Bubble><Fit w={237}>(18:13:05) Patricio Calacasan can now view</Fit><Fit w={194}>and control the customer's screen.</Fit></Bubble>
          </ChatLog>
          <ChatRule />
          <Message><Fit w={108}>Type your message</Fit></Message>
          <Send>SEND</Send>
        </Chat>
      </Workspace>
    </Page>
  );
}
